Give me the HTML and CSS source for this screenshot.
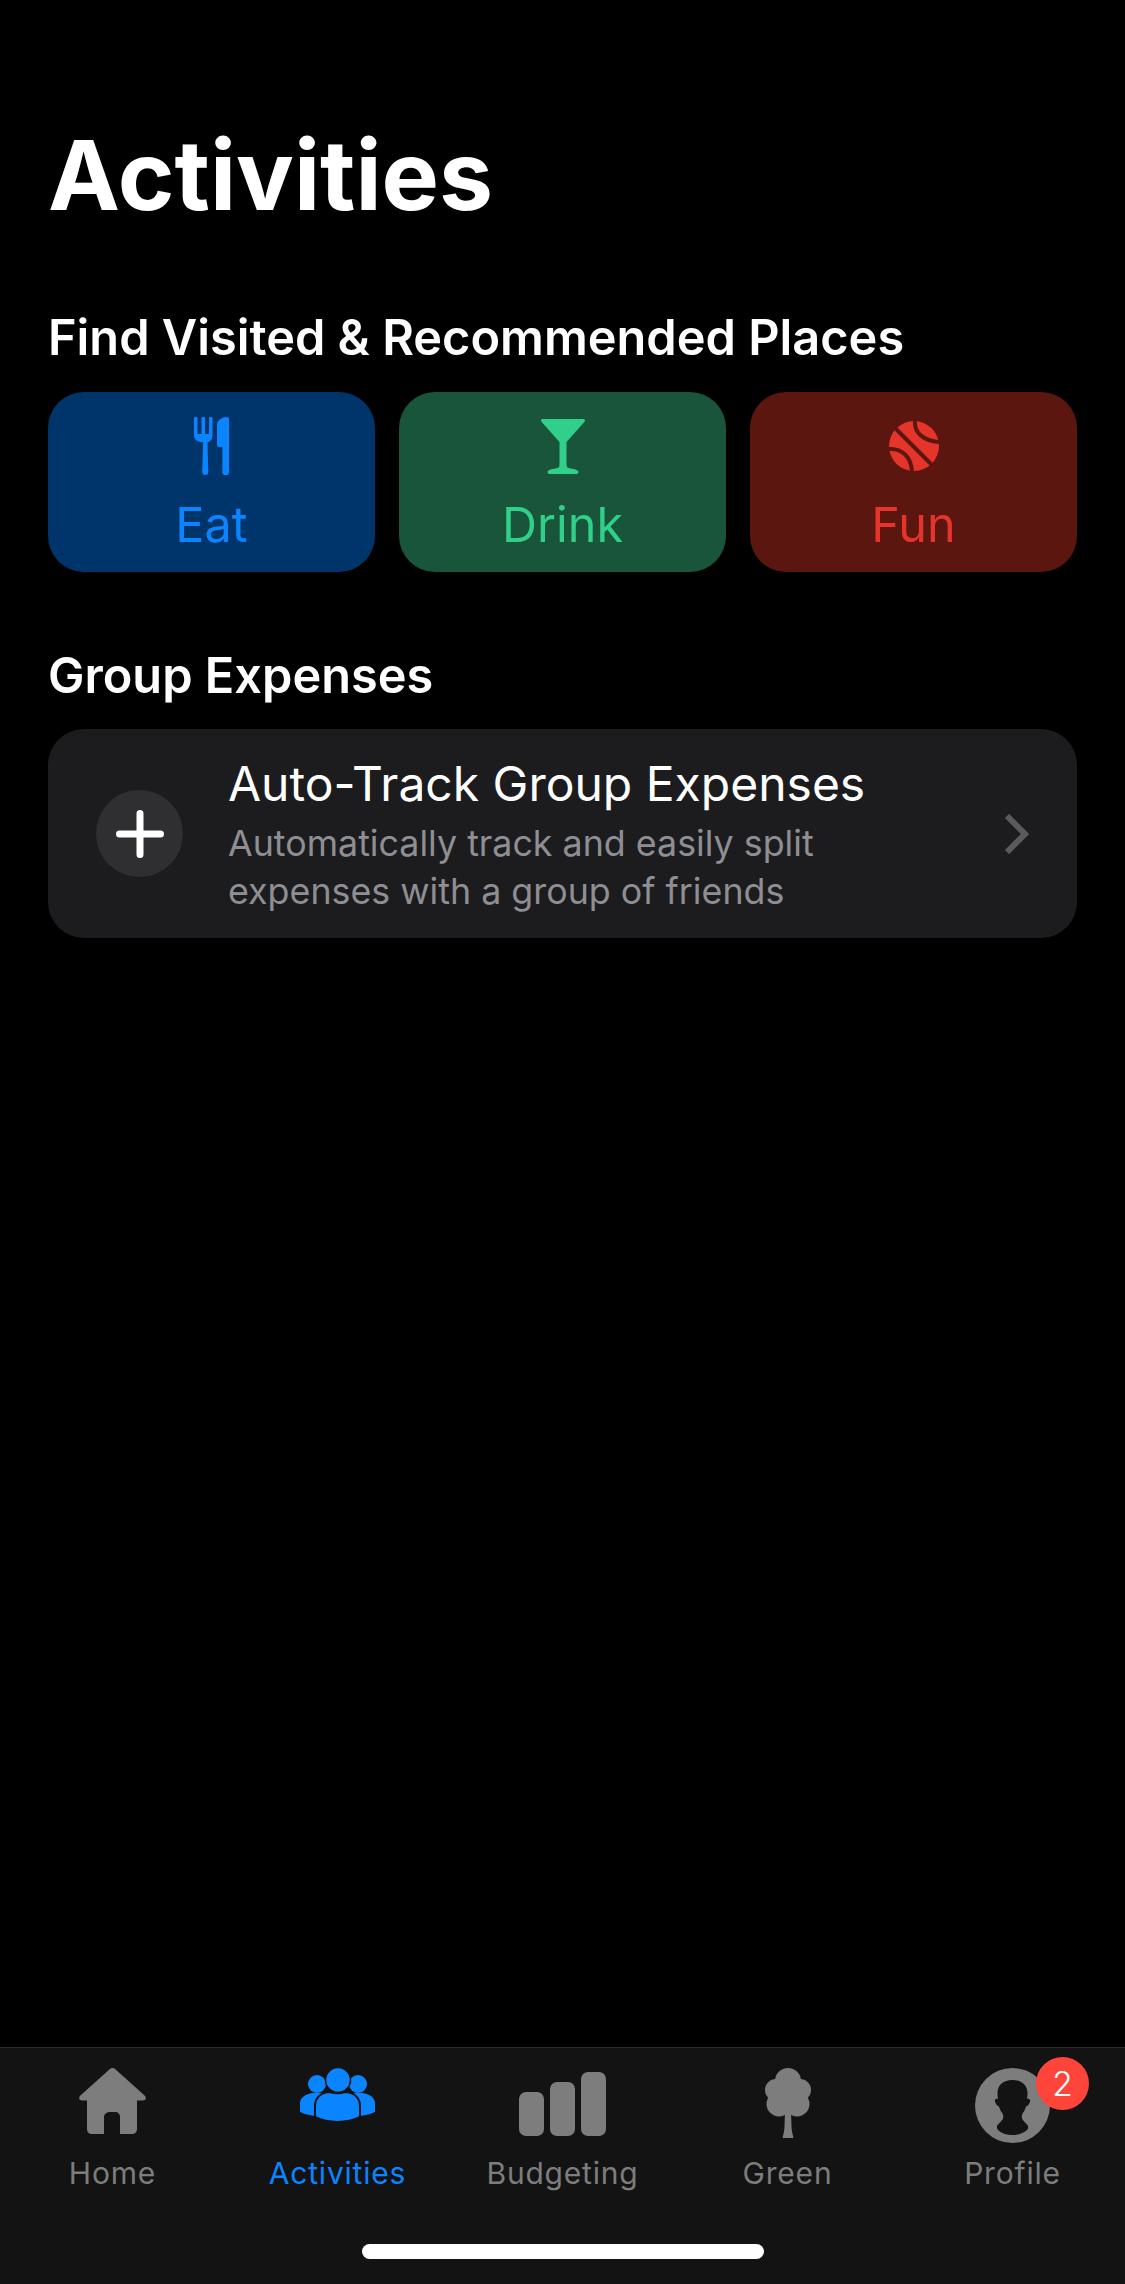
FILE: index.html
```html
<!DOCTYPE html>
<html lang="en">
<head>
    <meta charset="UTF-8">
    <meta name="viewport" content="width=device-width, initial-scale=1.0">
    <title>Activities</title>
    <link rel="stylesheet" href="styles.css">
</head>
<body>
    <div class="screen">
        <div class="content">
            <h1 class="page-title">Activities</h1>

            <h2 class="section-title">Find Visited &amp; Recommended Places</h2>
            <div class="places">
                <a href="#" class="place place-eat">
                    <span class="place-icon">
                        <svg viewBox="0 0 36 58" width="36" height="58">
                            <path fill="currentColor" d="M0 1.500a1.700 1.700 0 0 1 3.500 0V17h4V1.500a1.700 1.700 0 0 1 3.500 0V17h4V1.500a1.700 1.700 0 0 1 3.500 0V18c0 4-2 6.500-5 7.500l.8 29.500a3 3 0 0 1-6 0l.8-29.500C2 24.500 0 22 0 18z"/>
                            <path fill="currentColor" d="M23 28V8c0-4 4-8 10-8 1.300 0 2 .7 2 2v53a3.300 3.300 0 0 1-6.600 0V30h-3.400c-1.300 0-2-.7-2-2z"/>
                        </svg>
                    </span>
                    <span>Eat</span>
                </a>
                <a href="#" class="place place-drink">
                    <span class="place-icon">
                        <svg viewBox="0 0 44 55" width="44" height="55">
                            <path fill="currentColor" d="M2 0h40c2 0 2.500 1.500 1.300 3L25.500 23v23c0 2.500 1 3 4 3.500 4 .6 8 1.500 8 3.500 0 1.300-.8 2-2 2H8.500c-1.200 0-2-.7-2-2 0-2 4-2.900 8-3.500 3-.5 4-1 4-3.500V23L.7 3C-.5 1.500 0 0 2 0z"/>
                        </svg>
                    </span>
                    <span>Drink</span>
                </a>
                <a href="#" class="place place-fun">
                    <span class="place-icon">
                        <svg viewBox="0 0 50 50" width="50" height="50">
                            <circle cx="25" cy="25" r="25" fill="currentColor"/>
                            <path fill="none" stroke="#5c1610" stroke-width="4" d="M6 7l37 37M26 0c-1 12 9 20 24 21M0 28c13-1 22 8 23 22"/>
                        </svg>
                    </span>
                    <span>Fun</span>
                </a>
            </div>

            <h2 class="section-title group-title">Group Expenses</h2>
            <a href="#" class="expense-card">
                <span class="plus-circle">
                    <svg viewBox="0 0 48 48" width="48" height="48">
                        <path fill="none" stroke="#fff" stroke-width="7" stroke-linecap="round" d="M24 3.500v41M3.500 24h41"/>
                    </svg>
                </span>
                <span class="expense-text">
                    <span class="expense-name">Auto-Track Group Expenses</span>
                    <span class="expense-desc">Automatically track and easily split<br>expenses with a group of friends</span>
                </span>
                <svg class="chevron" viewBox="0 0 26 40" width="26" height="40">
                    <path fill="none" stroke="#5a5a5e" stroke-width="6" d="M3 2l18 18L3 38"/>
                </svg>
            </a>
        </div>

        <div class="tabbar">
            <div class="tabs">
                <a href="#" class="tab">
                    <span class="tab-icon">
                        <svg viewBox="0 0 67 66" width="67" height="66">
                            <path fill="currentColor" d="M33.500 0c1 0 1.800.4 2.600 1.100l29.500 26.400c2.300 2.100 1.300 5-1.700 5H58V61c0 3-2 5-5 5H41V49c0-3-2-5-5-5h-5c-3 0-6 2-6 5v17H13c-3 0-5-2-5-5V32.500H3.100c-3 0-4-2.900-1.700-5L30.900 1.100C31.700.4 32.500 0 33.500 0z"/>
                        </svg>
                    </span>
                    <span class="tab-label">Home</span>
                </a>
                <a href="#" class="tab active">
                    <span class="tab-icon">
                        <svg viewBox="0 0 75 53" width="75" height="53">
                            <circle cx="17" cy="16" r="9" fill="currentColor"/>
                            <circle cx="58" cy="16" r="9" fill="currentColor"/>
                            <path fill="currentColor" d="M0 44V35c0-5 5-9 13-10h10v24C14 48 6 47 0 44zM75 44V35c0-5-5-9-13-10H52v24c9-1 17-2 23-5z"/>
                            <circle cx="38" cy="12" r="12.500" fill="currentColor" stroke="#131313" stroke-width="1.500"/>
                            <path fill="currentColor" stroke="#131313" stroke-width="2" d="M15 49V38c0-8 6-14 15-14 5 1.500 10 1.500 15 0 9 0 15 6 15 14v11c-6 3-14 5-22.500 5S21 52 15 49z"/>
                        </svg>
                    </span>
                    <span class="tab-label">Activities</span>
                </a>
                <a href="#" class="tab">
                    <span class="tab-icon">
                        <span class="bars">
                            <i class="bar bar-low"></i>
                            <i class="bar bar-mid"></i>
                            <i class="bar bar-high"></i>
                        </span>
                    </span>
                    <span class="tab-label">Budgeting</span>
                </a>
                <a href="#" class="tab">
                    <span class="tab-icon">
                        <svg viewBox="0 0 46 70" width="46" height="70">
                            <g fill="currentColor">
                                <circle cx="23" cy="13" r="13"/>
                                <circle cx="11" cy="22" r="11"/>
                                <circle cx="35" cy="22" r="11"/>
                                <circle cx="14" cy="36" r="12.500"/>
                                <circle cx="32" cy="36" r="12.500"/>
                                <circle cx="23" cy="30" r="14"/>
                                <path d="M20 44h6l.5 14c0 4 1 8 2 12H17.500c1-4 2-8 2-12z"/>
                            </g>
                        </svg>
                    </span>
                    <span class="tab-label">Green</span>
                </a>
                <a href="#" class="tab">
                    <span class="tab-icon">
                        <svg viewBox="0 0 75 75" width="75" height="75">
                            <circle cx="37.500" cy="37.500" r="37.500" fill="currentColor"/>
                            <path fill="#131313" d="M37.500 12c9 0 15 5 15 13 0 2-.2 4-.5 5.500 2.500 0 3.500 1 3 3-.6 2.500-2 4.500-4 5-.8 3-2 5-3.500 7-1 2-1 4.500 0 6 1.500 2 3 3.500 4.500 5 1.700 2 1.500 4-.5 6-3.500 3-8.500 4.500-14 4.500s-10.500-1.500-14-4.500c-2-2-2.200-4-.5-6 1.500-1.500 3-3 4.500-5 1-1.500 1-4 0-6-1.500-2-2.700-4-3.500-7-2-.5-3.400-2.500-4-5-.5-2 .5-3 3-3-.3-1.500-.5-3.500-.5-5.500 0-8 6-13 15-13z"/>
                        </svg>
                        <span class="badge">2</span>
                    </span>
                    <span class="tab-label">Profile</span>
                </a>
            </div>
            <div class="home-indicator"></div>
        </div>
    </div>
</body>
</html>
```

FILE: styles.css
```css
* {
    box-sizing: border-box;
}
body {
    font-family: "Inter", "Liberation Sans", sans-serif;
    background-color: #000;
    margin: 0;
    padding: 0;
    color: #fff;
}
a {
    color: inherit;
    text-decoration: none;
}
.screen {
    display: flex;
    flex-direction: column;
    width: 1125px;
    height: 2284px;
}
.content {
    flex: 1;
    padding: 120px 48px 0;
}
.page-title {
    font-size: 96.5px;
    line-height: 110px;
    font-weight: 700;
    margin: 0;
}
.section-title {
    font-size: 48.7px;
    line-height: 56px;
    font-weight: 600;
    margin: 80px 0 0;
}
.places {
    display: flex;
    gap: 24px;
    margin-top: 26px;
}
.place {
    flex: 1;
    height: 180px;
    border-radius: 36px;
    display: flex;
    flex-direction: column;
    align-items: center;
    padding-top: 24px;
    font-size: 48.5px;
    line-height: 56px;
}
.place-icon {
    display: flex;
    align-items: center;
    height: 60px;
    margin-bottom: 21px;
}
.place-eat {
    background-color: #00356b;
    color: #0a84ff;
}
.place-drink {
    background-color: #19553a;
    color: #30d08a;
}
.place-fun {
    background-color: #5c1610;
    color: #e5352a;
}
.group-title {
    margin-top: 76px;
}
.expense-card {
    display: flex;
    align-items: center;
    height: 209px;
    margin-top: 25px;
    padding: 0 47px 0 48px;
    background-color: #1c1c1e;
    border-radius: 36px;
}
.plus-circle {
    flex: none;
    width: 87px;
    height: 87px;
    border-radius: 50%;
    background-color: #2f2f31;
    display: flex;
    align-items: center;
    justify-content: center;
}
.expense-text {
    flex: 1;
    margin-left: 45px;
    padding-top: 3px;
    display: flex;
    flex-direction: column;
}
.expense-name {
    font-size: 48px;
    line-height: 56px;
}
.expense-desc {
    font-size: 35.8px;
    line-height: 48px;
    color: #8e8e93;
    margin-top: 7px;
}
.chevron {
    flex: none;
}
.tabbar {
    height: 237px;
    background-color: #131313;
    border-top: 1px solid #2c2c2e;
    display: flex;
    flex-direction: column;
}
.tabs {
    display: flex;
}
.tab {
    flex: 1;
    display: flex;
    flex-direction: column;
    align-items: center;
    color: #7d7d7d;
}
.tab.active {
    color: #0a84ff;
}
.tab-icon {
    position: relative;
    height: 100px;
    padding-top: 20px;
    display: flex;
    align-items: flex-start;
}
.tab-label {
    font-size: 30px;
    line-height: 36px;
    letter-spacing: 0.8px;
    margin-top: 7px;
}
.bars {
    display: flex;
    align-items: flex-end;
    gap: 6px;
    height: 64px;
    margin-top: 4px;
}
.bar {
    display: block;
    width: 25px;
    background-color: currentColor;
    border-radius: 7px;
}
.bar-low {
    height: 44px;
}
.bar-mid {
    height: 54px;
}
.bar-high {
    height: 64px;
}
.badge {
    position: absolute;
    top: 9px;
    right: -39px;
    width: 53px;
    height: 53px;
    border-radius: 50%;
    background-color: #ff453a;
    color: #fff;
    font-size: 34px;
    font-weight: 300;
    line-height: 53px;
    text-align: center;
}
.home-indicator {
    width: 402px;
    height: 15px;
    border-radius: 8px;
    background-color: #fff;
    margin: 53px auto 0;
}
```
